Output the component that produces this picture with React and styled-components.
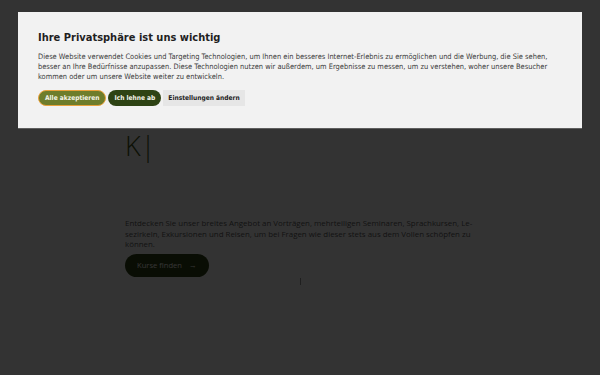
import React from "react";
import styled, { createGlobalStyle } from "styled-components";

const GlobalStyle = createGlobalStyle`
  html, body {
    margin: 0;
    padding: 0;
    width: 600px;
    height: 375px;
    overflow: hidden;
    background: #ffffff;
  }
`;

const Page = styled.div`
  width: 600px;
  height: 375px;
  display: flex;
  justify-content: center;
  font-family: "Open Sans", "Noto Sans", sans-serif;
`;

const Column = styled.div`
  width: 350px;
  padding-top: 128px;
  display: flex;
  flex-direction: column;
  align-items: flex-start;
`;

const Heading = styled.h1`
  margin: 0;
  font-family: "Open Sans", sans-serif;
  font-weight: 300;
  font-size: 27px;
  line-height: 36px;
  color: #45561a;
`;

const Lead = styled.p`
  margin: 54px 0 0;
  font-size: 7.9px;
  line-height: 10.6px;
  color: #5c5c5c;
`;

const PillButton = styled.button`
  margin-top: 4px;
  height: 23px;
  padding: 0 12px;
  border: none;
  border-radius: 12px;
  background: #2f4214;
  color: #ffffff;
  font-family: "Open Sans", sans-serif;
  font-size: 7.6px;
  display: flex;
  align-items: center;
  gap: 7px;
`;

const ScrollMark = styled.div`
  align-self: center;
  margin-top: 1px;
  width: 1px;
  height: 7px;
  background: #9a9a9a;
`;

const Backdrop = styled.div`
  position: fixed;
  inset: 0;
  background: rgba(0, 0, 0, 0.8);
`;

const Banner = styled.div`
  position: fixed;
  top: 12px;
  left: 18px;
  width: 564px;
  box-sizing: border-box;
  padding: 19px 20px 22px;
  background: #f2f2f2;
  border-bottom: 1px solid #5f5f5f;
  font-family: "DejaVu Sans", Verdana, sans-serif;
  font-stretch: condensed;
`;

const Title = styled.h2`
  margin: 0;
  font-size: 11px;
  line-height: 14px;
  font-weight: bold;
  color: #1f1f1f;
`;

const Text = styled.p`
  margin: 7px 0 0;
  font-size: 7.45px;
  line-height: 10px;
  color: #3b3b3b;
  max-width: 515px;
`;

const Actions = styled.div`
  margin-top: 8px;
  display: flex;
  gap: 2px;
`;

const ActionButton = styled.button`
  height: 16px;
  padding: 0 ${(p) => (p.$variant === "plain" ? "5px" : "6px")};
  font-family: "DejaVu Sans", Verdana, sans-serif;
  font-stretch: condensed;
  font-size: 6.6px;
  font-weight: bold;
  box-sizing: border-box;
  border-radius: ${(p) => (p.$variant === "plain" ? "0" : "8px")};
  border: ${(p) => (p.$variant === "accept" ? "1.5px solid #e9a23b" : "none")};
  background: ${(p) =>
    p.$variant === "accept" ? "#6e7d2b" : p.$variant === "deny" ? "#2e4314" : "#e6e6e6"};
  color: ${(p) => (p.$variant === "plain" ? "#222222" : "#f4f4ea")};
`;

export default function App() {
  return (
    <>
      <GlobalStyle />
      <Page>
        <Column>
          <Heading>K|</Heading>
          <Lead>
            Entdecken Sie unser breites Angebot an Vorträgen, mehrteiligen Seminaren, Sprachkursen, Le-
            <br />
            sezirkeln, Exkursionen und Reisen, um bei Fragen wie dieser stets aus dem Vollen schöpfen zu
            <br />
            können.
          </Lead>
          <PillButton>
            Kurse finden <span>→</span>
          </PillButton>
          <ScrollMark />
        </Column>
      </Page>
      <Backdrop />
      <Banner>
        <Title>Ihre Privatsphäre ist uns wichtig</Title>
        <Text>
          Diese Website verwendet Cookies und Targeting Technologien, um Ihnen ein besseres Internet-Erlebnis zu
          ermöglichen und die Werbung, die Sie sehen, besser an Ihre Bedürfnisse anzupassen. Diese Technologien
          nutzen wir außerdem, um Ergebnisse zu messen, um zu verstehen, woher unsere Besucher kommen oder um
          unsere Website weiter zu entwickeln.
        </Text>
        <Actions>
          <ActionButton $variant="accept">Alle akzeptieren</ActionButton>
          <ActionButton $variant="deny">Ich lehne ab</ActionButton>
          <ActionButton $variant="plain">Einstellungen ändern</ActionButton>
        </Actions>
      </Banner>
    </>
  );
}
